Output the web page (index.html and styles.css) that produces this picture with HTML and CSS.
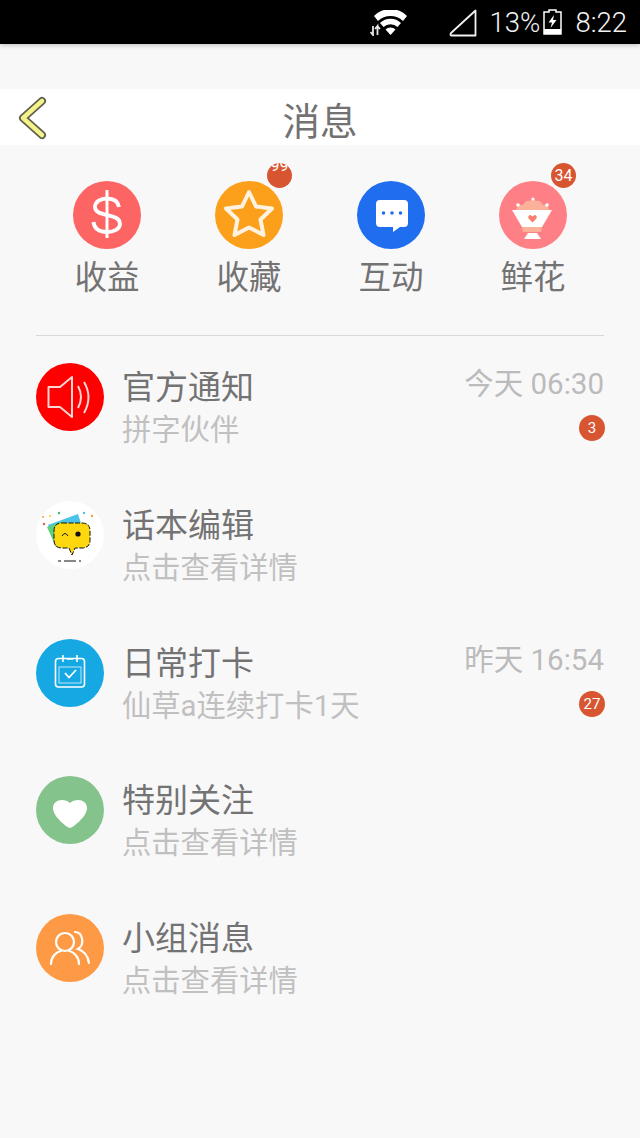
FILE: index.html
```html
<!DOCTYPE html>
<html>
  <head>
    <meta charset="utf-8">
    <title>消息</title>
    <link rel="stylesheet" href="styles.css">
  </head>
  <body>
    <div class="statusbar">
      <svg class="ic-wifi" width="38" height="26" viewBox="0 0 38 26">
        <path d="M4 6 A23 23 0 0 1 37 6 L33 11 A18 18 0 0 0 8 11 Z" fill="#fff"/>
        <path d="M10 13 A15 15 0 0 1 31 13 L27.500 17 A10 10 0 0 0 13.500 17 Z" fill="#fff"/>
        <path d="M15.500 19.500 A7 7 0 0 1 25.500 19.500 L20.500 25 Z" fill="#fff"/>
        <path d="M3 16 V25 M0.500 22 L3 25 L3 16 M7.500 25 V16 L5 19 M7.500 16 L10 19" stroke="#e8e8e8" stroke-width="1.800" fill="none"/>
      </svg>
      <svg class="ic-signal" width="28" height="28" viewBox="0 0 28 28">
        <path d="M26.500 1.500 V26.500 H3 Q0.500 26.500 2 24 Z" fill="none" stroke="#f2f2f2" stroke-width="1.800" stroke-linejoin="round"/>
      </svg>
      <span class="pct">13%</span>
      <svg class="ic-batt" width="19" height="26" viewBox="0 0 19 26">
        <path d="M6 1 H13 V3 H18 V25 H1 V3 H6 Z" fill="none" stroke="#fff" stroke-width="1.500"/>
        <rect x="1" y="20" width="17" height="5" fill="#fff"/>
        <path d="M11 6 L5.500 13.500 H9 L7.500 19 L13.500 11 H10 Z" fill="#fff"/>
      </svg>
      <span class="clock">8:22</span>
    </div>

    <div class="gap"></div>

    <div class="topbar">
      <svg class="back" width="32" height="44" viewBox="0 0 32 44">
        <path d="M25 5 L6 22 L25 39" fill="none" stroke="#5f5f4e" stroke-width="8" stroke-linecap="round" stroke-linejoin="round"/>
        <path d="M25 5 L6 22 L25 39" fill="none" stroke="#f4f38a" stroke-width="4.500" stroke-linecap="round" stroke-linejoin="round"/>
      </svg>
      <div class="toptext">消息</div>
    </div>

    <div class="tabs">
      <div class="tab">
        <div class="round c-red">
          <svg width="68" height="68" viewBox="0 0 68 68">
            <path d="M46 26 C45 20 40 17.500 34 17.500 C27 17.500 22 21 22 26 C22 37 47 31 47 43 C47 48 41 51 34 51 C27 51 21 48 20.500 41" fill="none" stroke="#fff" stroke-width="3.800"/>
            <path d="M34 9 V57" stroke="#fff" stroke-width="3"/>
          </svg>
        </div>
        <div class="tablabel">收益</div>
      </div>
      <div class="tab">
        <div class="round c-amber">
          <svg width="68" height="68" viewBox="0 0 68 68">
            <path d="M34 11 L41 25.500 L57 27.500 L45.500 38.500 L48.500 54 L34 46.500 L19.500 54 L22.500 38.500 L11 27.500 L27 25.500 Z" fill="none" stroke="#fff2e0" stroke-width="4" stroke-linejoin="round"/>
          </svg>
          <span class="badge cut"><span class="nine">99</span><span class="plus">+</span></span>
        </div>
        <div class="tablabel">收藏</div>
      </div>
      <div class="tab">
        <div class="round c-blue">
          <svg width="68" height="68" viewBox="0 0 68 68">
            <path d="M23 19 H47 Q51 19 51 23 V42 Q51 46 47 46 H43 L36 51 V46 H23 Q19 46 19 42 V23 Q19 19 23 19 Z" fill="#fff"/>
            <circle cx="26.500" cy="32" r="1.800" fill="#206ef0"/>
            <circle cx="35" cy="32" r="1.800" fill="#206ef0"/>
            <circle cx="43.500" cy="32" r="1.800" fill="#206ef0"/>
          </svg>
        </div>
        <div class="tablabel">互动</div>
      </div>
      <div class="tab">
        <div class="round c-pink">
          <svg width="68" height="68" viewBox="0 0 68 68">
            <path d="M17 29 Q19 23 24 24 Q27 19 31 20 Q34 16 37 20 Q41 19 44 24 Q49 23 50 29 Z" fill="#fbb09a"/>
            <circle cx="34" cy="18" r="1.600" fill="#fff"/>
            <circle cx="19" cy="24" r="1.800" fill="#fff"/>
            <circle cx="48" cy="24" r="1.800" fill="#fff"/>
            <path d="M13 29 H53 L43 46 H23 Z" fill="#fff"/>
            <path d="M23 46 H43 L42 51 H24 Z" fill="#fbb09a"/>
            <path d="M29 52 H38 L42 58 H25 Z" fill="#fff"/>
            <path d="M33.500 41.500 L29.500 37.500 Q28.500 34 31.500 34 L33.500 35.500 L35.500 34 Q38.500 34 37.500 37.500 Z" fill="#f9806f"/>
          </svg>
          <span class="badge">34</span>
        </div>
        <div class="tablabel">鲜花</div>
      </div>
    </div>

    <div class="msglist">
      <div class="msg">
        <div class="round c-pure">
          <svg width="68" height="68" viewBox="0 0 68 68">
            <path d="M12.500 24 H24 L36 14 V54 L24 44 H12.500 Z" fill="none" stroke="#fbd4d4" stroke-width="2" stroke-linejoin="round"/>
            <path d="M42 23 Q48 34 42 45" fill="none" stroke="#fbd4d4" stroke-width="2"/>
            <path d="M48 19 Q57 34 48 50" fill="none" stroke="#fbd4d4" stroke-width="2"/>
          </svg>
        </div>
        <div class="msgbody">
          <div class="msgtitle">官方通知</div>
          <div class="msgsub">拼字伙伴</div>
        </div>
        <div class="msgside">
          <div class="msgtime">今天 06:30</div>
          <span class="count">3</span>
        </div>
      </div>

      <div class="msg">
        <div class="round c-white">
          <svg width="68" height="68" viewBox="0 0 68 68">
            <path d="M12 24 L42 13 L50 38 L20 46 Z" fill="#4cc3e8"/>
            <path d="M11 26 L28 20 L30 46 L20 46 Z" fill="#5cd07a"/>
            <path d="M26 22 H46 Q54 22 54 30 V39 Q54 47 46 47 H39 L36 54 L33 47 H26 Q18 47 18 39 V30 Q18 22 26 22 Z" fill="#fdd80e" stroke="#111" stroke-width="1" stroke-dasharray="5 1.500"/>
            <circle cx="42" cy="33" r="2.600" fill="#111"/>
            <path d="M26 35 Q29 30 32 35" fill="none" stroke="#111" stroke-width="1"/>
            <path d="M22 60 H46" stroke="#111" stroke-width="1" stroke-dasharray="3 3 12 3 2"/>
            <circle cx="7" cy="16" r="1" fill="#f4a13a"/>
            <circle cx="14" cy="15" r="1.200" fill="#f9d86a"/>
            <circle cx="23" cy="12" r="1.200" fill="#3cb878"/>
            <circle cx="8" cy="23" r="1.200" fill="#e0584a"/>
            <circle cx="48" cy="12" r="1.200" fill="#4cc3e8"/>
            <circle cx="56" cy="15" r="1.200" fill="#f4a13a"/>
          </svg>
        </div>
        <div class="msgbody">
          <div class="msgtitle">话本编辑</div>
          <div class="msgsub">点击查看详情</div>
        </div>
      </div>

      <div class="msg">
        <div class="round c-sky">
          <svg width="68" height="68" viewBox="0 0 68 68">
            <rect x="19.500" y="19.500" width="29" height="28.500" rx="3" fill="none" stroke="#fff" stroke-width="1.600"/>
            <path d="M27 16 V23 M41 16 V23 M31 20 H37" stroke="#fff" stroke-width="1.600" fill="none"/>
            <rect x="23" y="28" width="22" height="16" fill="none" stroke="#bfe6f7" stroke-width="1"/>
            <path d="M29 34 L33 38.500 L40 31" stroke="#fff" stroke-width="1.800" fill="none"/>
          </svg>
        </div>
        <div class="msgbody">
          <div class="msgtitle">日常打卡</div>
          <div class="msgsub">仙草a连续打卡1天</div>
        </div>
        <div class="msgside">
          <div class="msgtime">昨天 16:54</div>
          <span class="count">27</span>
        </div>
      </div>

      <div class="msg">
        <div class="round c-green">
          <svg width="68" height="68" viewBox="0 0 68 68">
            <path d="M34 52 C32 52 17 41 17 32 C17 27 21 24 26 24 C29 24 32 25 34 27 C36 25 39 24 42 24 C47 24 51 27 51 32 C51 41 36 52 34 52 Z" fill="#fff"/>
          </svg>
        </div>
        <div class="msgbody">
          <div class="msgtitle">特别关注</div>
          <div class="msgsub">点击查看详情</div>
        </div>
      </div>

      <div class="msg">
        <div class="round c-orange">
          <svg width="68" height="68" viewBox="0 0 68 68">
            <circle cx="29" cy="28" r="9" fill="none" stroke="#fff" stroke-width="2.200"/>
            <path d="M15 50 C15 43 20 38 25 37 M43 50 C43 43 38 38 33 37" fill="none" stroke="#fff" stroke-width="2.200" stroke-linecap="round"/>
            <path d="M39 18 C47 18 49 31 42 35 C48 37 52 42 53 49" fill="none" stroke="#fff" stroke-width="2.200" stroke-linecap="round"/>
          </svg>
        </div>
        <div class="msgbody">
          <div class="msgtitle">小组消息</div>
          <div class="msgsub">点击查看详情</div>
        </div>
      </div>
    </div>
  </body>
</html>
```

FILE: styles.css
```css
html, body {
  margin: 0;
  height: 1138px;
  overflow: hidden;
}

body {
  background: #f9f8f9;
  color: #727272;
  font-family: Roboto, "Noto Sans CJK SC", sans-serif;
}

.statusbar {
  height: 44px;
  background: #000;
  color: #f2f2f2;
  display: flex;
  align-items: center;
  justify-content: flex-end;
  padding-right: 13px;
  box-shadow: 0 1px 5px rgba(0, 0, 0, 0.25);
  font-size: 27.500px;
  font-weight: 300;
}

.ic-wifi {
  margin-right: 41px;
  margin-top: 2px;
}

.ic-signal {
  margin-right: 13px;
  margin-top: 1px;
}

.pct {
  margin-right: 3px;
}

.clock {
  margin-left: 13px;
}

.gap {
  height: 45px;
}

.topbar {
  height: 56px;
  background: #fff;
  display: flex;
  align-items: center;
  justify-content: center;
  position: relative;
}

.back {
  position: absolute;
  left: 17px;
  top: 7px;
}

.toptext {
  font-size: 37.500px;
  padding-top: 3px;
  color: #727272;
}

.tabs {
  margin: 36px 36px 0;
  padding-bottom: 35px;
  border-bottom: 1px solid #d9d9d9;
  display: grid;
  grid-template-columns: repeat(4, 1fr);
}

.tab {
  display: flex;
  flex-direction: column;
  align-items: center;
}

.tablabel {
  font-size: 32.500px;
  line-height: 44px;
  margin-top: 7px;
  color: #737373;
}

.round {
  width: 68px;
  height: 68px;
  border-radius: 50%;
  position: relative;
  flex: none;
}

.round svg {
  display: block;
}

.c-red { background: #fd6464; }
.c-amber { background: #fca01b; }
.c-blue { background: #206ef0; }
.c-pink { background: #fe8086; }
.c-pure { background: #fe0000; }
.c-white { background: #fff; }
.c-sky { background: #15a8e3; }
.c-green { background: #85c38c; }
.c-orange { background: #fe9a45; }

.badge {
  position: absolute;
  top: -18px;
  right: -9px;
  width: 25px;
  height: 25px;
  border-radius: 50%;
  background: #d75531;
  color: #fff;
  font-size: 16px;
  line-height: 25px;
  text-align: center;
  overflow: hidden;
}

.badge.cut .nine {
  display: block;
  line-height: 14px;
  margin-top: -4px;
}

.badge.cut .plus {
  display: block;
  line-height: 14px;
  width: 12px;
  margin-top: 11px;
}

.msglist {
  padding: 27px 36px 0;
}

.msg {
  height: 137.750px;
  display: flex;
  align-items: flex-start;
}

.msgbody {
  flex: 1;
  margin-left: 18px;
}

.msgtitle {
  font-size: 33px;
  line-height: 45px;
  margin-top: 2px;
  color: #737373;
}

.msgsub {
  font-size: 29.300px;
  line-height: 40px;
  color: #c0c0c0;
}

.msgside {
  display: flex;
  flex-direction: column;
  align-items: flex-end;
}

.msgtime {
  font-size: 29.500px;
  line-height: 42px;
  color: #bbb;
}

.count {
  width: 26px;
  height: 26px;
  margin-top: 10px;
  margin-right: -1px;
  border-radius: 50%;
  background: #d75531;
  color: #fff;
  font-size: 15px;
  line-height: 26px;
  text-align: center;
}
```
